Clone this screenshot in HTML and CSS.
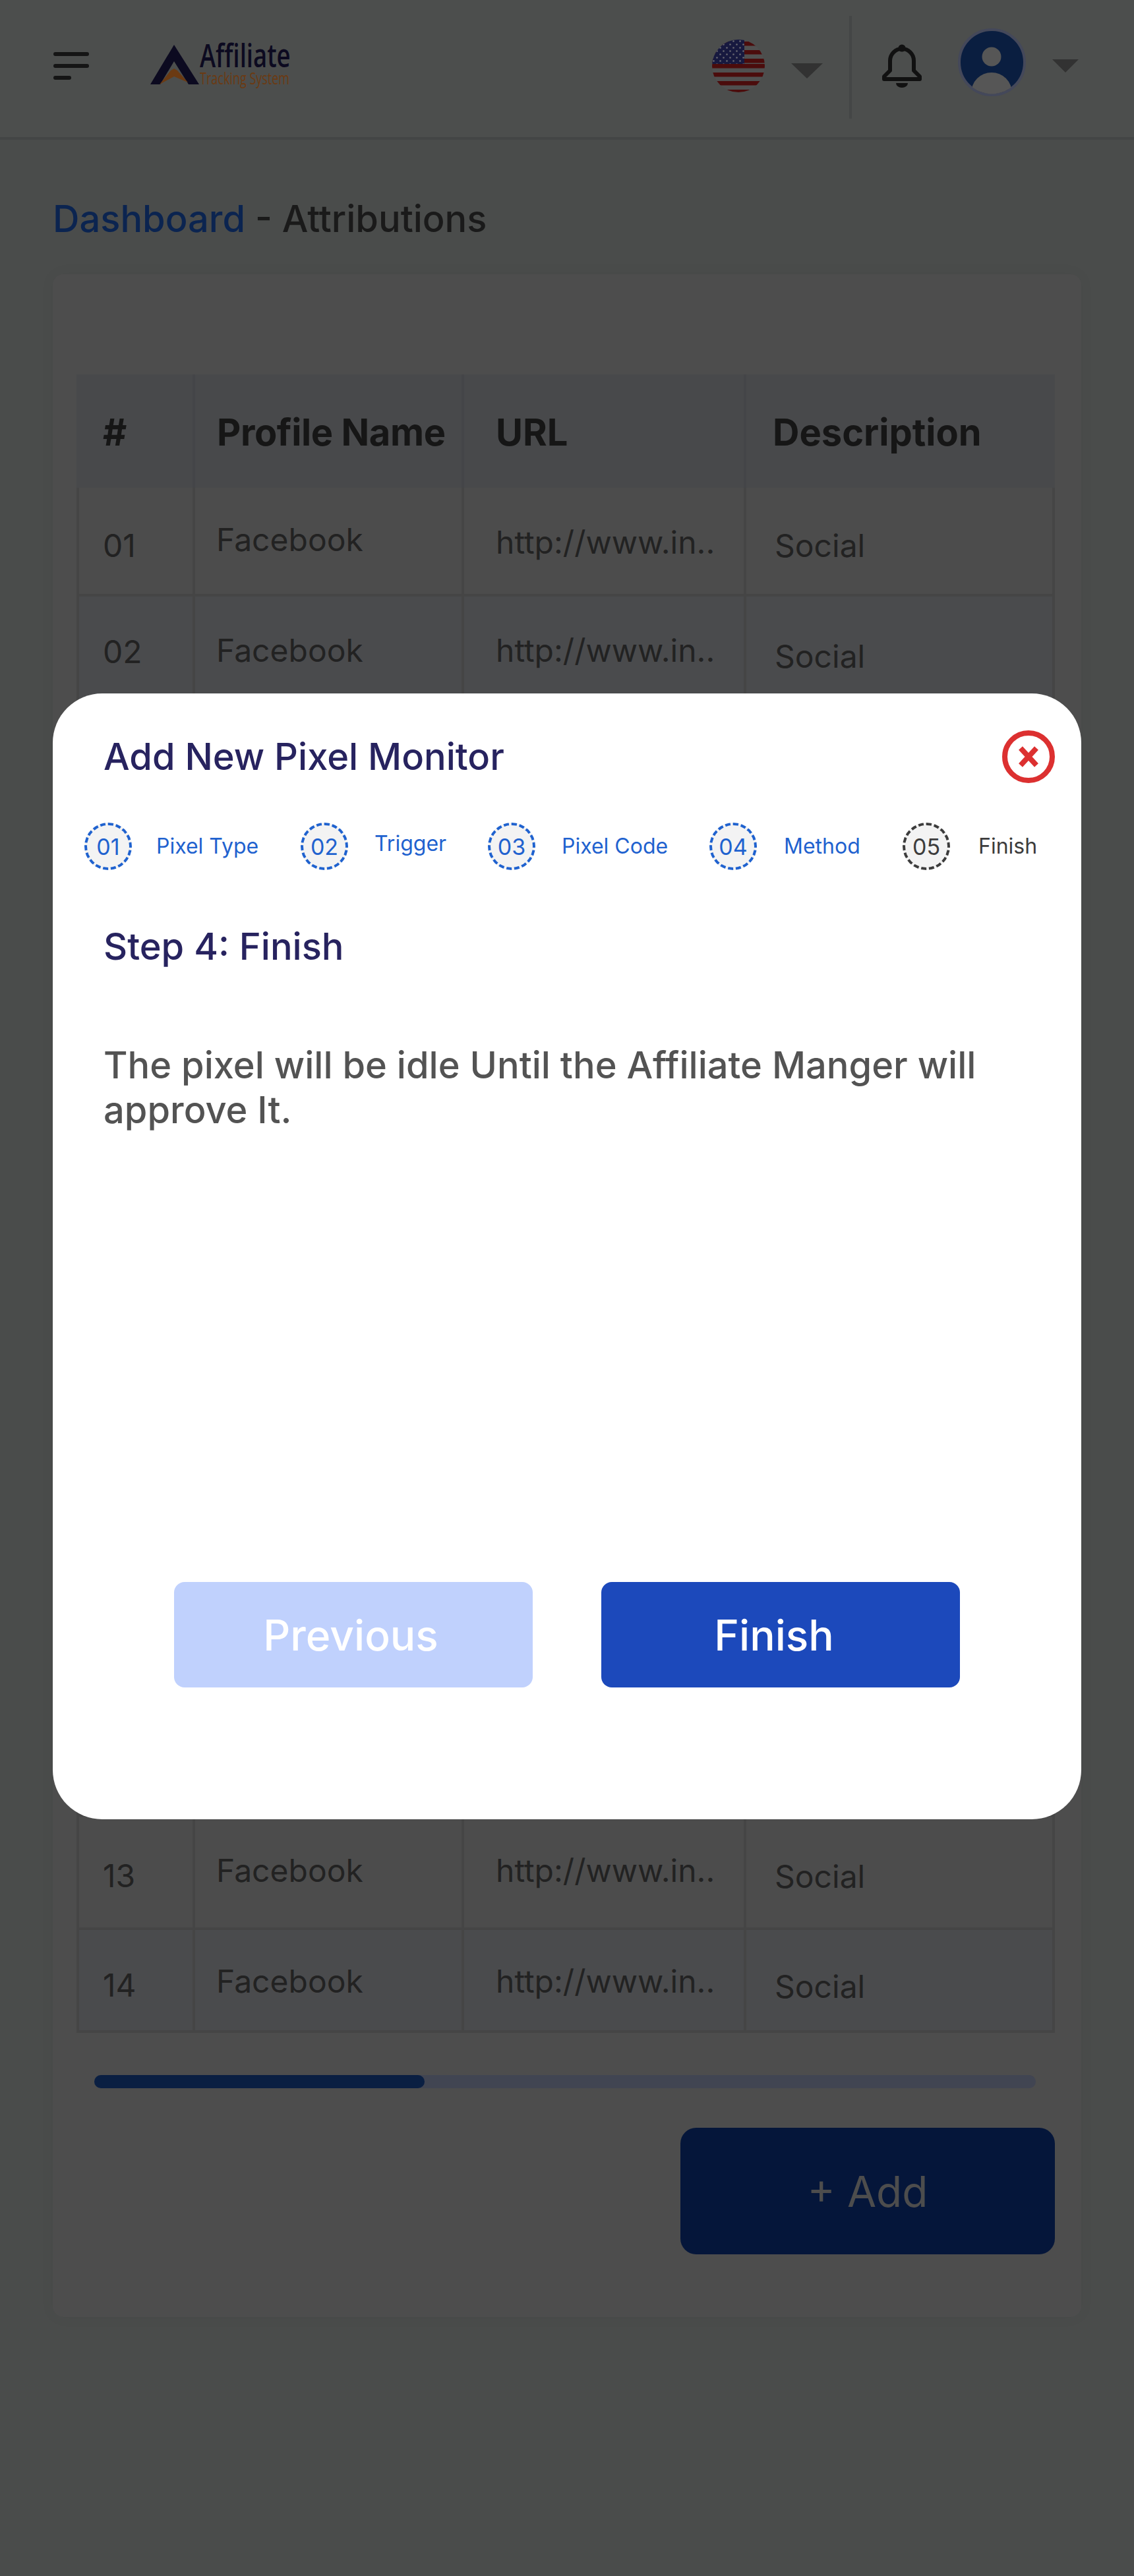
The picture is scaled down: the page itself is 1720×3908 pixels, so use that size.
FILE: index.html
```html
<!DOCTYPE html>
<html lang="en">
<head>
<meta charset="utf-8">
<title>Attributions</title>
<link rel="stylesheet" href="styles.css">
</head>
<body>
<div class="page">
  <header class="topbar">
    <svg class="menu-icon" viewBox="0 0 54 42"><rect width="54" height="6" rx="3" y="0"/><rect width="54" height="6" rx="3" y="18"/><rect width="27" height="6" rx="3" y="36"/></svg>
    <div class="logo">
      <svg class="logo-mark" viewBox="0 0 74 62"><path class="logo-navy" d="M36 0 74 60H58L36 25 15 60H0Z"/><path class="logo-orange" d="M14 60 31 39 36 36 41 39 57 57 36 48Z"/></svg>
      <div class="logo-text"><span class="logo-main">Affiliate</span><span class="logo-sub">Tracking System</span></div>
    </div>
    <div class="top-actions">
      <svg class="flag" viewBox="0 0 80 80">
        <defs>
          <clipPath id="flagClip"><circle cx="40" cy="40" r="40"/></clipPath>
          <pattern id="stars" width="10" height="10" patternUnits="userSpaceOnUse"><circle cx="2.5" cy="2.5" r="1.3" fill="#6a6a72"/><circle cx="7.5" cy="7.5" r="1.3" fill="#6a6a72"/></pattern>
        </defs>
        <g clip-path="url(#flagClip)">
          <rect width="80" height="80" fill="#505050"/>
          <rect y="3" width="80" height="6.5" fill="#4b0c0c"/><rect y="16" width="80" height="6.5" fill="#4b0c0c"/><rect y="29" width="80" height="6.5" fill="#4b0c0c"/><rect y="50" width="80" height="6.5" fill="#4b0c0c"/><rect y="63" width="80" height="6.5" fill="#4b0c0c"/><rect y="76" width="80" height="6.5" fill="#4b0c0c"/>
          <rect y="37" width="80" height="6.5" fill="#4b0c0c"/>
          <rect width="49" height="37" fill="#17193f"/><rect width="49" height="37" fill="url(#stars)"/>
        </g>
      </svg>
      <span class="caret caret-lg"></span>
      <span class="divider"></span>
      <svg class="bell" viewBox="0 0 60 66"><path class="bell-line" d="M3 53V49L12 40V25A18 18 0 0 1 48 25V40L57 49V53Z"/><circle class="bell-fill" cx="30" cy="6" r="5.5"/><path class="bell-fill" d="M21 59H39A9 7 0 0 1 21 59Z"/></svg>
      <svg class="avatar" viewBox="0 0 104 104">
        <defs><clipPath id="avClip"><circle cx="51.500" cy="51.500" r="48"/></clipPath></defs>
        <circle cx="51.500" cy="51.500" r="49.500" fill="#0a1e40" stroke="#44485a" stroke-width="4"/>
        <g clip-path="url(#avClip)"><circle cx="51" cy="43" r="14.500" fill="#565656"/><circle cx="51" cy="98" r="31" fill="#565656"/></g>
      </svg>
      <span class="caret caret-sm"></span>
    </div>
  </header>

  <main class="content">
    <h1 class="crumb"><a class="crumb-link">Dashboard</a> - Attributions</h1>
    <section class="card">
      <table class="grid">
        <colgroup><col class="c1"><col class="c2"><col class="c3"><col class="c4"></colgroup>
        <thead><tr><th>#</th><th>Profile Name</th><th>URL</th><th>Description</th></tr></thead>
        <tbody>
          <tr class="r-first"><td class="num">01</td><td class="name">Facebook</td><td class="url">http://www.in..</td><td class="desc">Social</td></tr>
          <tr class="r-second"><td class="num">02</td><td class="name">Facebook</td><td class="url">http://www.in..</td><td class="desc">Social</td></tr>
          <tr class="r-tall"><td></td><td></td><td></td><td></td></tr>
          <tr class="r-tall"><td></td><td></td><td></td><td></td></tr>
          <tr class="r-tall"><td></td><td></td><td></td><td></td></tr>
          <tr><td></td><td></td><td></td><td></td></tr>
          <tr><td></td><td></td><td></td><td></td></tr>
          <tr><td></td><td></td><td></td><td></td></tr>
          <tr><td></td><td></td><td></td><td></td></tr>
          <tr><td></td><td></td><td></td><td></td></tr>
          <tr><td></td><td></td><td></td><td></td></tr>
          <tr><td></td><td></td><td></td><td></td></tr>
          <tr class="r-13"><td class="num">13</td><td class="name">Facebook</td><td class="url">http://www.in..</td><td class="desc">Social</td></tr>
          <tr class="r-last"><td class="num">14</td><td class="name">Facebook</td><td class="url">http://www.in..</td><td class="desc">Social</td></tr>
        </tbody>
      </table>
      <div class="scroll-track"><div class="scroll-thumb"></div></div>
      <div class="card-actions"><button class="add-btn">+ Add</button></div>
    </section>
  </main>

  <div class="modal">
    <div class="modal-head">
      <h2 class="modal-title">Add New Pixel Monitor</h2>
      <svg class="close-icon" viewBox="0 0 80 80"><circle cx="40" cy="40" r="36" class="close-ring"/><path class="close-x" d="M28 27 52 53M52 27 28 53"/></svg>
    </div>
    <ol class="steps">
      <li class="step done"><span class="step-no">01</span><span class="step-label">Pixel Type</span></li>
      <li class="step done"><span class="step-no">02</span><span class="step-label raised">Trigger</span></li>
      <li class="step done"><span class="step-no">03</span><span class="step-label">Pixel Code</span></li>
      <li class="step done"><span class="step-no">04</span><span class="step-label">Method</span></li>
      <li class="step"><span class="step-no">05</span><span class="step-label">Finish</span></li>
    </ol>
    <h3 class="step-title">Step 4: Finish</h3>
    <p class="step-text">The pixel will be idle Until the Affiliate Manger will approve It.</p>
    <div class="modal-actions">
      <button class="btn btn-prev">Previous</button>
      <button class="btn btn-next">Finish</button>
    </div>
  </div>
</div>
</body>
</html>
```
FILE: styles.css
```css
* { box-sizing: border-box; }
html, body { margin: 0; padding: 0; }
body { background: #4a4c4b; font-family: Inter, "Liberation Sans", sans-serif; }
.page { position: relative; width: 1720px; height: 3908px; overflow: hidden; }

.topbar { height: 212px; background: #4c4e4d; border-bottom: 4px solid #434545; display: flex; align-items: flex-start; padding-left: 81px; }
.menu-icon { width: 54px; height: 42px; margin-top: 79px; fill: #151515; flex: none; }
.logo { display: flex; margin-left: 93px; margin-top: 68px; }
.logo-mark { width: 74px; height: 62px; flex: none; }
.logo-navy { fill: #0c0a20; }
.logo-orange { fill: #6b3a12; }
.logo-text { display: flex; flex-direction: column; margin-left: 1px; width: 136px; }
.logo-main { font-family: "Open Sans", sans-serif; font-weight: 600; font-size: 48px; line-height: 42px; height: 42px; margin-top: -5px; color: #0c0a20; transform: scaleX(.76); transform-origin: left center; white-space: nowrap; }
.logo-sub { font-family: "Open Sans", sans-serif; font-size: 25px; line-height: 26px; color: #6b3a12; transform: scaleX(.72); transform-origin: left center; white-space: nowrap; }

.top-actions { margin-left: auto; display: flex; align-items: flex-start; padding-right: 84px; }
.flag { width: 80px; height: 80px; margin-top: 60px; flex: none; }
.caret { width: 0; height: 0; border-style: solid; border-color: #323232 transparent transparent; flex: none; }
.caret-lg { border-width: 23px 24px 0; margin: 96px 0 0 40px; }
.divider { width: 4px; height: 156px; margin: 24px 0 0 40px; background: #444646; flex: none; }
.bell { width: 60px; height: 66px; margin: 67px 0 0 46px; flex: none; }
.bell-line { fill: none; stroke: #111; stroke-width: 6; stroke-linejoin: round; }
.bell-fill { fill: #111; }
.avatar { width: 104px; height: 104px; margin: 43px 0 0 55px; flex: none; }
.caret-sm { border-width: 20px 20px 0; margin: 90px 0 0 39px; }

.content { padding: 0 80px; }
.crumb { margin: 0; padding-top: 92px; font-weight: 500; font-size: 56px; line-height: 56px; color: #1a1a1a; height: 204px; }
.crumb-link { color: #0b2450; }

.card { height: 3099px; background: #4d4d4d; border-radius: 16px; box-shadow: 0 0 24px rgba(0,0,0,.04); padding: 152px 40px 0 36px; }
.grid { width: 1484px; table-layout: fixed; border-collapse: separate; border-spacing: 0; color: #222; }
.c1 { width: 180px; } .c2 { width: 408px; } .c3 { width: 428px; } .c4 { width: 468px; }
.grid th { height: 172px; background: #48494b; border-right: 4px solid #444548; padding: 60px 0 0 40px; vertical-align: top; text-align: left; font-weight: 700; font-size: 56px; line-height: 56px; color: #161616; }
.grid th:nth-child(2) { padding-left: 33px; letter-spacing: -.4px; }
.grid th:nth-child(3) { padding-left: 48px; }
.grid th:last-child { border-right: 0; }
.grid tbody tr { height: 168px; --num: 64px; --name: 58px; --url: 58px; --desc: 67px; }
.grid tbody tr:nth-child(odd) td { background: #4c4c4c; }
.grid tbody tr:nth-child(even) td { background: #4a4b4d; }
.grid td { height: inherit; border-right: 4px solid #454545; border-bottom: 4px solid #454545; vertical-align: top; font-size: 48px; line-height: 48px; white-space: nowrap; overflow: hidden; }
.grid td:first-child { border-left: 4px solid #454545; }
.num { padding: var(--num) 0 0 36px; }
.name { padding: var(--name) 0 0 32px; }
.url { padding: var(--url) 0 0 48px; }
.desc { padding: var(--desc) 0 0 43px; }
.grid tbody tr.r-first { height: 165px; --num: 64px; --name: 55px; --url: 59px; --desc: 64px; }
.grid tbody tr.r-second { --num: 60px; }
.grid tbody tr.r-tall { height: 169px; }
.grid tbody tr.r-13 { height: 172px; --num: 66px; }
.grid tbody tr.r-last { height: 156px; --num: 60px; --name: 54px; --url: 54px; --desc: 62px; }

.scroll-track { width: 1428px; height: 20px; margin: 64px 0 0 27px; border-radius: 10px; background: #414552; }
.scroll-thumb { width: 501px; height: 20px; border-radius: 10px; background: #0a1f42; }
.card-actions { display: flex; justify-content: flex-end; margin-top: 60px; }
.add-btn { width: 568px; height: 192px; border: 0; border-radius: 24px; background: #05163a; color: #4d4d4d; font-family: inherit; font-size: 64px; }

.modal { position: absolute; left: 80px; top: 1052px; width: 1560px; height: 1708px; background: #fff; border-radius: 75px; display: flex; flex-direction: column; padding: 56px 0 200px; }
.modal-head { display: flex; justify-content: space-between; align-items: center; height: 80px; padding: 0 40px 0 77px; }
.modal-title { margin: 0; font-weight: 500; font-size: 56px; line-height: 56px; color: #27235f; }
.close-icon { width: 80px; height: 80px; flex: none; }
.close-ring { fill: none; stroke: #dc3030; stroke-width: 8; }
.close-x { fill: none; stroke: #dc3030; stroke-width: 8; }

.steps { list-style: none; margin: 60px 0 0; padding: 0 0 0 48px; display: grid; grid-template-columns: 328px 284px 336px 293px auto; }
.step { display: flex; align-items: center; color: #3c3c3c; }
.step.done { color: #1f62cf; }
.step-no { width: 72px; height: 72px; border: 4px dashed currentColor; border-radius: 50%; background: #f3f3f3; display: flex; align-items: center; justify-content: center; font-size: 34px; flex: none; }
.step-label { margin-left: 40px; font-size: 32px; line-height: 40px; white-space: nowrap; }
.step:nth-child(1) .step-label { margin-left: 37px; }
.step:nth-child(4) .step-label { margin-left: 41px; }
.step:nth-child(5) .step-label { margin-left: 43px; }
.step-label.raised { margin-bottom: 8px; }

.step-title { margin: 88px 0 0; padding-left: 77px; font-weight: 500; font-size: 56px; line-height: 56px; color: #27235f; }
.step-text { margin: 118px 0 0; padding: 0 77px; font-weight: 470; font-size: 56px; line-height: 68px; color: #535353; }
.modal-actions { margin-top: auto; display: flex; justify-content: center; gap: 104px; }
.btn { width: 544px; height: 160px; border: 0; border-radius: 16px; color: #fff; font-family: inherit; font-weight: 470; font-size: 64px; padding: 0 8px 0 0; }
.btn-prev { background: #c0d1fd; }
.btn-next { background: #1c49bb; padding-right: 20px; }
```
